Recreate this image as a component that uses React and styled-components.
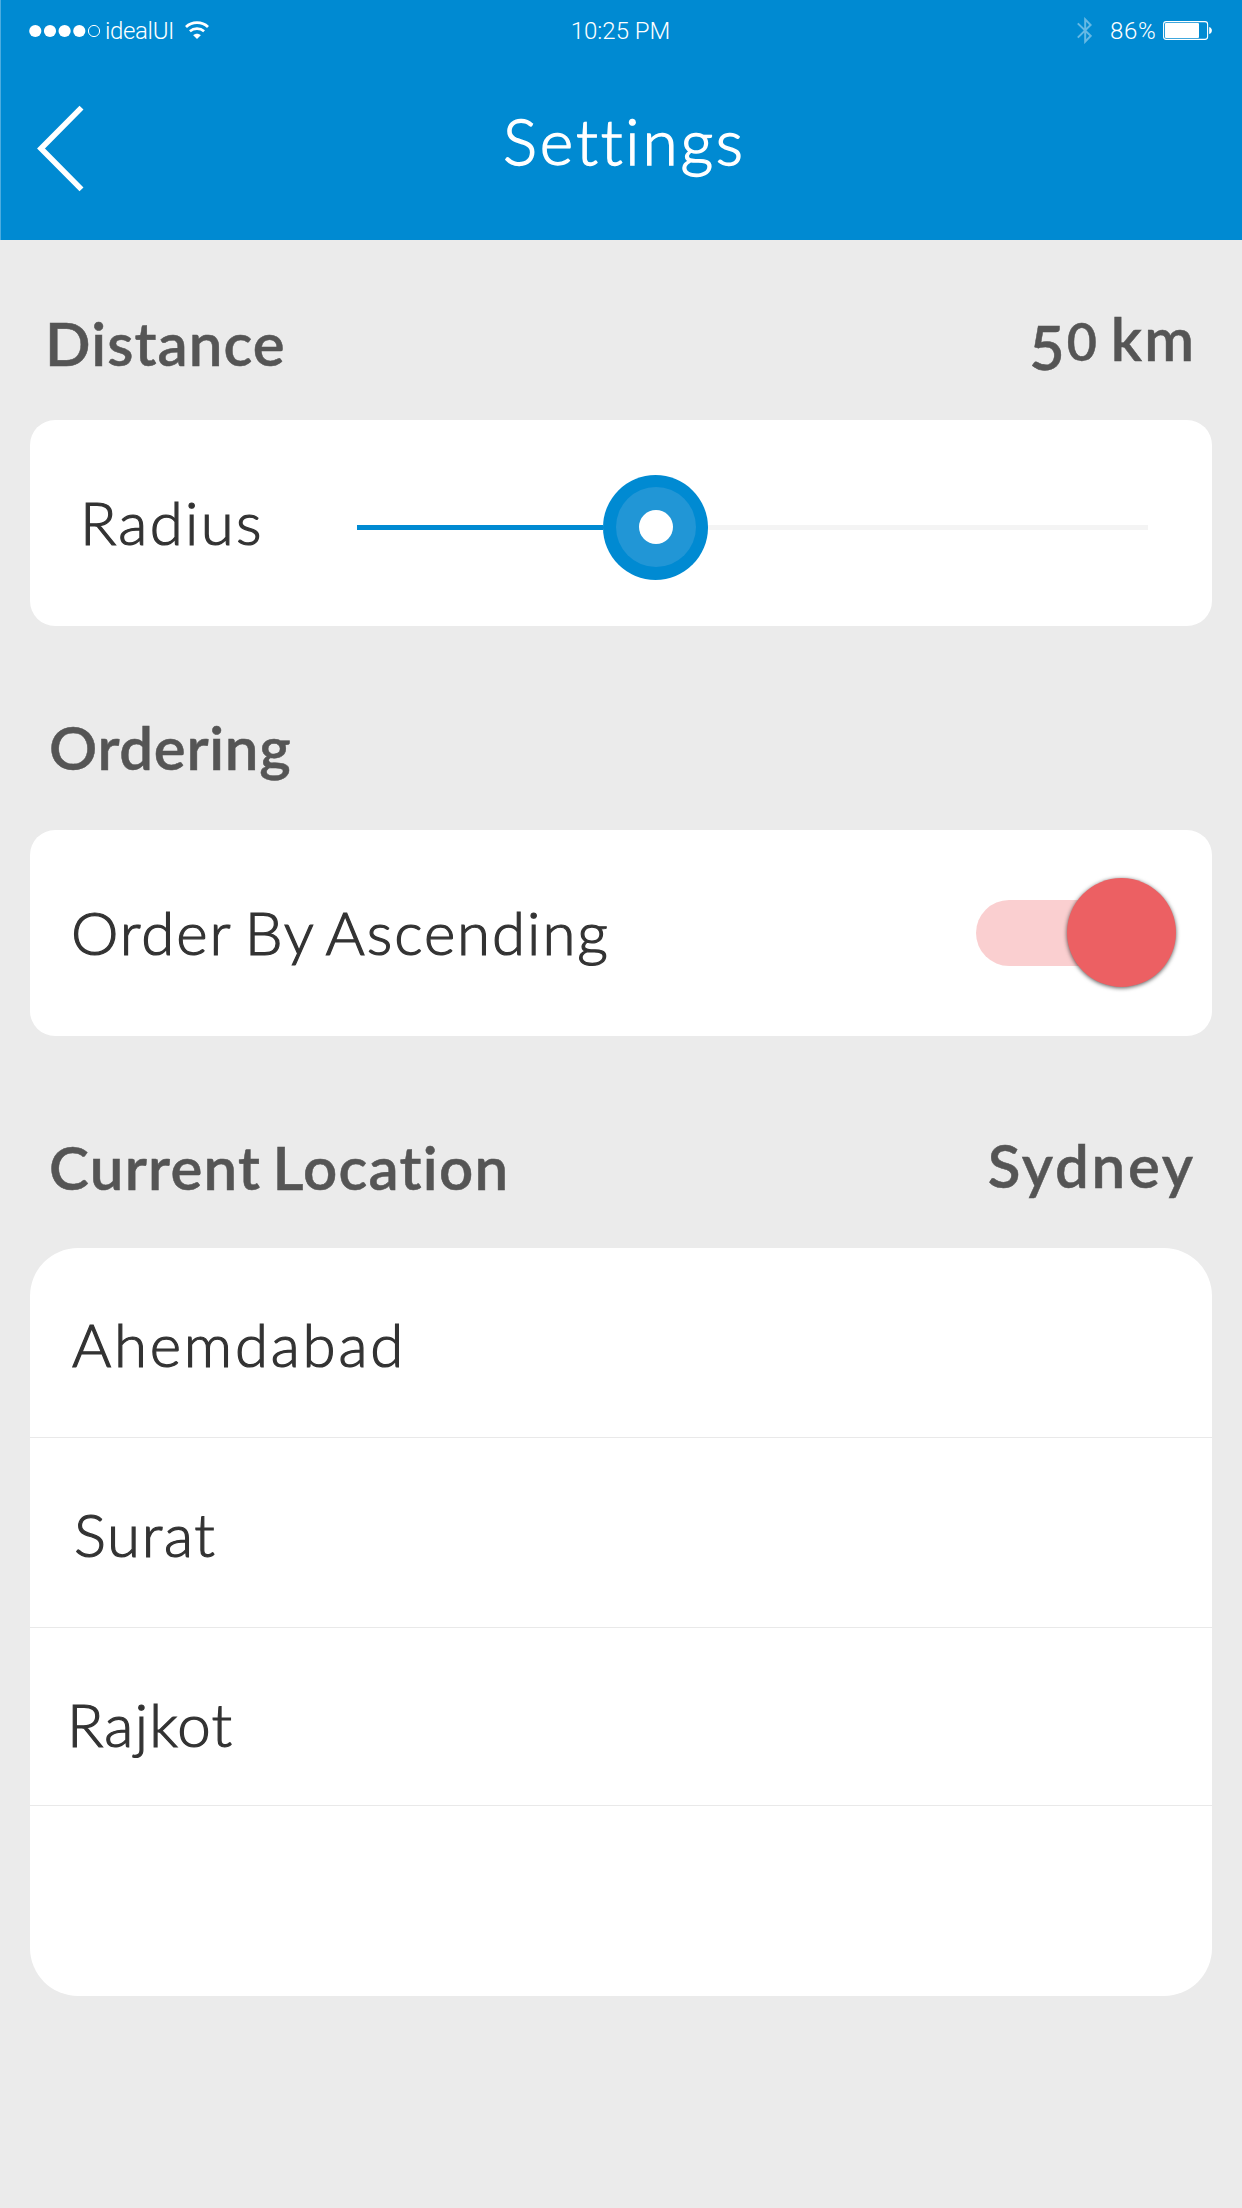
import React from "react";
import styled, { createGlobalStyle } from "styled-components";

const GlobalStyle = createGlobalStyle`
  * { box-sizing: border-box; }
  body { margin: 0; background: #ebebeb; }
`;

const Screen = styled.div`
  width: 1242px;
  height: 2208px;
  overflow: hidden;
  background: #ebebeb;
  font-family: Lato, "Open Sans", sans-serif;
  font-variant-ligatures: none;
  color: #333;
`;

const Header = styled.header`
  height: 240px;
  background: #008ad2;
  border-left: 1px solid #4dacdf;
  color: #fff;
`;

const StatusBar = styled.div`
  display: grid;
  grid-template-columns: 1fr auto 1fr;
  align-items: center;
  height: 61px;
  padding: 0 29px 0 27px;
  font: 300 24px/28px Roboto, "Liberation Sans", sans-serif;
`;

const StatusGroup = styled.div`
  display: flex;
  align-items: center;
  justify-content: ${(p) => (p.$end ? "flex-end" : "flex-start")};
`;

const StatusText = styled.span`
  letter-spacing: ${(p) => p.$spacing || 0}px;
  margin: 0 ${(p) => p.$right || 0}px 0 ${(p) => p.$left || 0}px;
`;

const NavBar = styled.div`
  display: grid;
  grid-template-columns: 120px 1fr 120px;
`;

const BackButton = styled.button`
  display: flex;
  padding: 42px 0 0 34px;
  border: 0;
  background: none;
  color: inherit;
`;

const Title = styled.h1`
  margin: 42px 0 0 6px;
  text-align: center;
  font-size: 64px;
  font-weight: 300;
  -webkit-text-stroke: 1.4px currentColor;
  line-height: 76px;
  letter-spacing: ${(p) => p.$spacing}px;
`;

const SectionHead = styled.div`
  display: flex;
  justify-content: space-between;
  align-items: flex-start;
  height: ${(p) => p.$height}px;
  padding: ${(p) => p.$top}px 46px 0 ${(p) => p.$left}px;
  color: #555;
`;

const Heading = styled.h2`
  margin: ${(p) => p.$top || 0}px 0 0;
  font-size: 60px;
  font-weight: 600;
  -webkit-text-stroke: 0.5px currentColor;
  line-height: 72px;
  letter-spacing: ${(p) => p.$spacing || 0}px;
  word-spacing: -5px;
  white-space: nowrap;
`;

const Digit = styled.span`
  font-size: ${(p) => (p.$drop ? 61 : 52)}px;
  line-height: 1;
  vertical-align: ${(p) => p.$drop || 0}px;
  letter-spacing: 2px;
`;

const Card = styled.section`
  display: flex;
  align-items: flex-start;
  height: 206px;
  margin: 0 30px;
  border-radius: 25px;
  background: #fff;
`;

const Label = styled.span`
  margin: ${(p) => p.$top}px 0 0 ${(p) => p.$left}px;
  font-size: 60px;
  font-weight: 300;
  -webkit-text-stroke: 1.2px currentColor;
  line-height: 72px;
  letter-spacing: ${(p) => p.$spacing || 0}px;
  word-spacing: -5px;
  white-space: nowrap;
`;

const Slider = styled.div`
  display: flex;
  align-items: center;
  width: 791px;
  height: 106px;
  margin: 54px 64px 0 auto;
`;

const Track = styled.div`
  height: 5px;
  background: ${(p) => (p.$filled ? "#008ad2" : "#f4f4f4")};
  flex: ${(p) => (p.$filled ? "0 0 246px" : "1")};
`;

const Thumb = styled.div`
  display: flex;
  align-items: center;
  justify-content: center;
  flex: none;
  width: 105px;
  height: 105px;
  border-radius: 50%;
  background: #008ad2;
`;

const ThumbRing = styled.div`
  display: flex;
  align-items: center;
  justify-content: center;
  width: 80px;
  height: 80px;
  border-radius: 50%;
  background: #2196d6;
`;

const ThumbDot = styled.div`
  width: 34px;
  height: 34px;
  border-radius: 50%;
  background: #fff;
`;

const Switch = styled.div`
  display: flex;
  align-items: center;
  justify-content: flex-end;
  width: 200px;
  height: 66px;
  margin: 70px 36px 0 auto;
  border-radius: 33px;
  background: linear-gradient(#facfd0, #facfd0) left / 150px 100% no-repeat;
`;

const Knob = styled.div`
  flex: none;
  width: 109px;
  height: 109px;
  margin: 0 0.5px 0.5px 0;
  border-radius: 50%;
  background: #ec6063;
  box-shadow: 0 1px 4px rgba(0, 0, 0, 0.65);
`;

const List = styled.ul`
  list-style: none;
  margin: 0 30px;
  padding: 0;
  height: 748px;
  border-radius: 48px;
  background: #fff;
`;

const Item = styled.li`
  display: flex;
  height: ${(p) => p.$height}px;
  border-bottom: 1px solid #e9e9e9;
`;

const SignalDots = () => (
  <svg width="73" height="14" viewBox="28 23.5 73 14">
    {[35.3, 50, 64.6, 79.3].map((x) => (
      <circle key={x} cx={x} cy="30.5" r="6.1" fill="#fff" />
    ))}
    <circle cx="94" cy="30.5" r="5.6" fill="none" stroke="#fff" strokeWidth="1" />
  </svg>
);

const WifiIcon = () => (
  <svg width="24" height="19" viewBox="0 0 24 19" fill="none" stroke="#fff">
    <path d="M1 5.9C7 .2 17 .2 23 5.9" strokeWidth="2.8" />
    <path d="M4.9 10.3c4-3.6 10.2-3.6 14.2 0" strokeWidth="2.6" />
    <path d="M8.2 14.2c2.2-2 5.4-2 7.6 0L12 18z" fill="#fff" stroke="none" />
  </svg>
);

const BluetoothIcon = () => (
  <svg width="15" height="27" viewBox="0 0 15 27" fill="none" stroke="#66b9e4" strokeWidth="2">
    <path d="M.8 6.4 13.6 18.9 8.2 24.6V2.4L13.6 8 .8 20.6" />
  </svg>
);

const BatteryIcon = () => (
  <svg width="50" height="19" viewBox="0 0 50 19">
    <rect x=".6" y=".6" width="44" height="17.8" rx="2.6" fill="none" stroke="#fff" strokeWidth="1.1" />
    <rect x="2" y="2" width="34" height="15" rx="1" fill="#fff" />
    <path d="M46.2 6c3.6 1 3.6 6 0 7z" fill="#fff" />
  </svg>
);

const BackIcon = () => (
  <svg width="50" height="90" viewBox="35 103 50 90" fill="none" stroke="#fff" strokeWidth="5.6">
    <path d="M81.5 107.6 41 148.5l40.5 40.9" />
  </svg>
);

const places = [
  { name: "Ahemdabad", height: 190, top: 60, left: 42, spacing: 2.8 },
  { name: "Surat", height: 190, top: 60, left: 44, spacing: 1.65 },
  { name: "Rajkot", height: 178, top: 60, left: 37, spacing: 1.3 },
];

export default function App() {
  return (
    <>
      <GlobalStyle />
      <Screen>
        <Header>
          <StatusBar>
            <StatusGroup>
              <SignalDots />
              <StatusText $left={4} $right={11} $spacing={-0.35}>idealUI</StatusText>
              <WifiIcon />
            </StatusGroup>
            <StatusText>10:25 PM</StatusText>
            <StatusGroup $end>
              <BluetoothIcon />
              <StatusText $left={18} $right={6.5} $spacing={0.7}>86%</StatusText>
              <BatteryIcon />
            </StatusGroup>
          </StatusBar>
          <NavBar>
            <BackButton aria-label="Back"><BackIcon /></BackButton>
            <Title $spacing={2.8}>Settings</Title>
          </NavBar>
        </Header>

        <SectionHead $height={180} $top={62} $left={45}>
          <Heading $top={5} $spacing={1.1}>Distance</Heading>
          <Heading $spacing={2}><Digit $drop={-9}>5</Digit><Digit>0</Digit> km</Heading>
        </SectionHead>
        <Card>
          <Label $top={66} $left={50} $spacing={2.3}>Radius</Label>
          <Slider>
            <Track $filled />
            <Thumb><ThumbRing><ThumbDot /></ThumbRing></Thumb>
            <Track />
          </Slider>
        </Card>

        <SectionHead $height={204} $top={85} $left={49}>
          <Heading $spacing={0.7}>Ordering</Heading>
        </SectionHead>
        <Card>
          <Label $top={66} $left={41} $spacing={1.95}>Order By Ascending</Label>
          <Switch><Knob /></Switch>
        </Card>

        <SectionHead $height={212} $top={93} $left={49}>
          <Heading $top={2} $spacing={1.28}>Current Location</Heading>
          <Heading $spacing={2.8}>Sydney</Heading>
        </SectionHead>
        <List>
          {places.map((p) => (
            <Item key={p.name} $height={p.height}>
              <Label $top={p.top} $left={p.left} $spacing={p.spacing}>{p.name}</Label>
            </Item>
          ))}
        </List>
      </Screen>
    </>
  );
}
